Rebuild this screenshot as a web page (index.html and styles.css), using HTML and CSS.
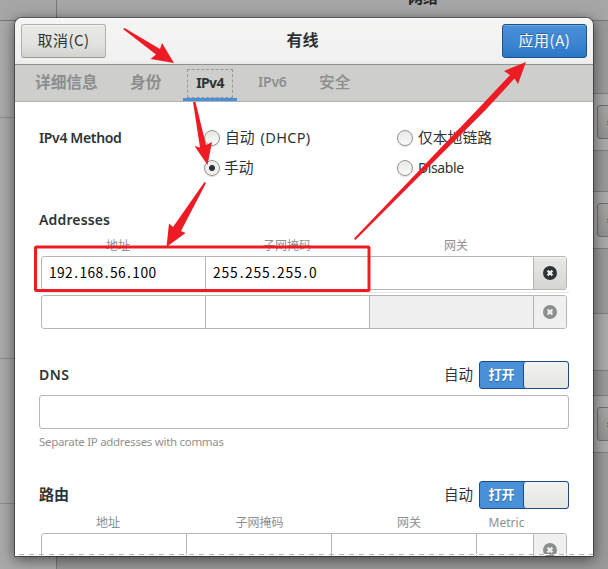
FILE: index.html
```html
<!DOCTYPE html>
<html lang="zh-CN">
<head>
<meta charset="utf-8">
<title>有线</title>
<link rel="stylesheet" href="styles.css">
</head>
<body>
<div class="window">
  <header class="window-bar"><div class="window-side"></div><div class="window-title">网络</div></header>
  <div class="window-body">
    <div class="sidebar"><i class="s1"></i><i class="s2"></i><i class="s3"></i></div>
    <div class="panel">
      <div class="gap g1"></div><div class="card"><span class="cog">⚙</span></div>
      <div class="gap g2"></div><div class="card"><span class="cog">⚙</span></div>
      <div class="gap g3"></div><div class="card"></div>
      <div class="gap g4"></div><div class="card"><span class="cog">⚙</span></div>
      <div class="gap g5"></div>
    </div>
  </div>
</div>

<div class="dialog">
  <header class="titlebar">
    <button class="btn">取消(C)</button>
    <h1>有线</h1>
    <button class="btn primary">应用(A)</button>
  </header>
  <nav class="tabs">
    <span class="tab t1">详细信息</span><span class="tab t2">身份</span><span class="tab active"><b>IPv4</b></span><span class="tab t4">IPv6</span><span class="tab t5">安全</span>
  </nav>
  <main>
    <section class="method">
      <h2 class="method-title">IPv4 Method</h2>
      <label><i class="radio"></i><span>自动<span class="dhcp">(DHCP)</span></span></label>
      <label><i class="radio"></i><span>仅本地链路</span></label>
      <span></span>
      <label class="chosen"><i class="radio on"></i><span>手动</span></label>
      <label><i class="radio"></i><span class="disable">Disable</span></label>
    </section>
    <h2 class="addresses">Addresses</h2>
    <div class="heads three"><span>地址</span><span>子网掩码</span><span>网关</span></div>
    <div class="fields three">
      <div>192<s>.</s>168<s>.</s>56<s>.</s>100</div><div class="mask">255<s>.</s>255<s>.</s>255<s>.</s>0</div><div></div>
      <button class="remove"><svg viewBox="0 0 14 14"><circle cx="7" cy="7" r="7"/><path d="M4.6 4.6l4.8 4.8M9.4 4.6L4.6 9.4"/></svg></button>
    </div>
    <div class="divider"></div>
    <div class="fields three">
      <div></div><div></div><div class="off"></div>
      <button class="remove off"><svg viewBox="0 0 14 14"><circle cx="7" cy="7" r="7"/><path d="M4.6 4.6l4.8 4.8M9.4 4.6L4.6 9.4"/></svg></button>
    </div>
    <div class="row dns"><h2>DNS</h2><span class="auto">自动</span><div class="switch"><b>打开</b><i></i></div></div>
    <div class="entry"></div>
    <p class="hint">Separate IP addresses with commas</p>
    <div class="row routes"><h2>路由</h2><span class="auto">自动</span><div class="switch"><b>打开</b><i></i></div></div>
    <div class="heads four"><span>地址</span><span>子网掩码</span><span>网关</span><span>Metric</span></div>
    <div class="fields four">
      <div></div><div></div><div></div><div></div>
      <button class="remove off"><svg viewBox="0 0 14 14"><circle cx="7" cy="7" r="7"/><path d="M4.6 4.6l4.8 4.8M9.4 4.6L4.6 9.4"/></svg></button>
    </div>
  </main>
  <div class="more"></div>
</div>

<svg class="marks" viewBox="0 0 608 569">
  <path d="M123 29L124.500 28L160 49L162 43L174 63L150.500 59L156 54.500Z"/>
  <path d="M193 102L195.500 102L206 145L212 142L207.500 165L194.500 146L200 147.500Z"/>
  <path d="M204.500 182L206 183L181 231L185.500 233L166.500 247L169 223.500L173 227Z"/>
  <path d="M354 238.500L477 110L510 75L504 71L526 62L518 84L514.500 78.500L485.500 110L355.500 240Z"/>
  <rect x="35.500" y="247" width="333.500" height="43.500" rx="1"/>
</svg>
</body>
</html>
```

FILE: styles.css
```css
* { box-sizing: border-box; }
body {
  margin: 0; width: 608px; height: 569px; overflow: hidden; position: relative;
  font: 14.5px/20px "Noto Sans", "Noto Sans CJK SC", sans-serif; color: #2e3436; background: #a9a9a9;
}
h1, h2, p { margin: 0; }
button { font: inherit; color: inherit; padding: 0; }

.window { height: 569px; display: flex; flex-direction: column; }
.window-bar { height: 21px; display: flex; border-bottom: 1px solid #777770; background: #a6a6a6; }
.window-side { width: 57px; border-right: 1px solid #777; }
.window-title { flex: 1; padding-left: 351px; margin-top: -13px; font-weight: 700; line-height: 20px; color: #222; font-size: 15px; }
.window-body { flex: 1; display: flex; min-height: 0; }
.sidebar { flex: none; width: 57px; border-right: 1px solid #777; background: #a9a9a9; }
.sidebar i { display: block; border-bottom: 1px solid #8b8b8b; }
.s1 { height: 97px; } .s2 { height: 241px; } .s3 { height: 145px; }
.panel { flex: 1; min-width: 0; overflow: hidden; background: #999; }
.g1 { height: 72px; } .g2 { height: 40px; } .g3 { height: 64px; } .g4 { height: 24px; } .g5 { height: 116px; }
.card { height: 58px; background: #a9a9a9; border: solid #7e7e7e; border-width: 1px 0; padding: 11px 0 0 540px; }
.cog { display: block; width: 40px; height: 34px; border: 1px solid #6f6f6f; border-radius: 3px; background: linear-gradient(#a4a4a3, #929291); padding-left: 8px; line-height: 32px; font-size: 15px; color: #333; }

.dialog {
  position: absolute; left: 15px; top: 18px; width: 578px; height: 538px; overflow: hidden;
  background: #fff; border-radius: 7px 7px 0 0;
  box-shadow: 0 0 0 1px rgba(0,0,0,.4), 0 3px 14px 1px rgba(0,0,0,.52);
}
.titlebar { height: 47px; display: flex; align-items: flex-start; justify-content: space-between; padding: 6px 6px 0; background: linear-gradient(#f5f5f4, #f1f1f1 90%, #e9e9e8); border-top: 1px solid #fff; border-bottom: 1px solid #92928b; }
.titlebar .btn { margin-top: -1px; }
.titlebar h1 { font-size: 16px; line-height: 22px; margin: 4px 3px 0 0; }
.btn { width: 85px; height: 34px; border: 1px solid #b2b2ad; border-bottom-color: #989890; border-radius: 3px; background: linear-gradient(#e9e9e8, #e2e2e0 60%, #d2d2ce); box-shadow: inset 0 1px #f5f5f4; font: 15px/30px "Noto Sans CJK SC", sans-serif; letter-spacing: .5px; padding-bottom: 2px; }
.primary { color: #fff; border-color: #1c5187; background: linear-gradient(#4a90d9, #3c84d1 60%, #2a76c6); box-shadow: inset 0 1px #70a9e2; text-shadow: 0 -1px rgba(0,0,0,.3); }

.tabs { height: 37px; display: flex; background: #cececd; border-bottom: 1px solid #b1b1ad; color: #8b8e8e; font-size: 15.7px; font-weight: 600; line-height: 34px; }
.tab { height: 36px; white-space: nowrap; }
.t1 { margin-left: 20px; width: 95px; } .t2 { width: 53px; }
.active { width: 54px; border-bottom: 3px solid #4a90d9; color: #2e3436; padding: 4px 4px 0; margin-right: 21px; }
.active b { display: block; height: 29px; border: 1px dashed #989998; line-height: 26px; text-align: center; font-size: 14px; font-weight: 700; letter-spacing: -.6px; }
.t4 { width: 61px; font-size: 14px; letter-spacing: -.2px; }
.t5 { font-weight: 500; }

main { padding: 0 24px; }
h2 { font-size: 14px; font-weight: 600; line-height: 20px; }
.method-title { letter-spacing: -.35px; }
.addresses { letter-spacing: .15px; }
.method { display: grid; grid-template-columns: 165px 193px 1fr; grid-auto-rows: 30px; padding-top: 21px; align-items: center; }
.method label { display: flex; align-items: center; gap: 5px; white-space: nowrap; font-size: 14.8px; }
.method label > span { position: relative; top: -1px; }
.method .chosen { gap: 4px; }
.radio { width: 16px; height: 16px; flex: none; border: 1px solid #94948d; border-radius: 50%; background: linear-gradient(#e8e8e7, #fafafa); box-shadow: 0 1px 1px #ddd; }
.on { background: radial-gradient(circle, #2e3436 0 2.7px, #eeeeed 3.3px); }
.dhcp { font-size: 14.5px; letter-spacing: .3px; margin-left: 6px; }
.method label > .disable { font-size: 14px; letter-spacing: -.4px; top: 0; }
.addresses { margin-top: 27px; }

.heads { display: grid; font-size: 12px; line-height: 20px; color: #8d908f; text-align: center; }
.heads.three { grid-template-columns: 158px 180px 158px; margin: 6px 0 -1px; height: 21px; }
.heads.four { grid-template-columns: 138px 165px 134px 61px; margin-top: 4px; height: 20px; }
.fields { display: grid; margin: 0 2px; height: 34px; border: 1px solid #b6b6b3; border-radius: 3px; }
.fields > div { border-right: 1px solid #b6b6b3; padding-left: 7px; color: #000; font: 13.8px/31px "Noto Sans CJK SC", sans-serif; letter-spacing: .4px; }
.fields > .mask { letter-spacing: .9px; }
.fields s { display: inline-block; width: 6.3px; padding-left: 1px; text-decoration: none; }
.fields.three { grid-template-columns: 164px 164px 164px 1fr; }
.fields.four { grid-template-columns: 145px 145px 145px 57px 1fr; }
.remove { border: 0; display: flex; align-items: center; justify-content: center; background: linear-gradient(#e8e8e7, #d5d5d1); box-shadow: inset 0 1px #f5f5f4; border-radius: 0 2px 2px 0; }
.remove svg { width: 14px; height: 14px; fill: #2e3436; }
.remove path { stroke: #eee; stroke-width: 2.2; fill: none; }
.off { background: #f0f0f0; box-shadow: none; }
.off svg { fill: #8b8f8f; }
.divider { height: 1px; margin: 2px 0; background: #e5e5e5; }
.row { display: flex; align-items: center; height: 28px; }
.row h2 { flex: 1; letter-spacing: .5px; }
.dns { margin-top: 32px; }
.auto { font-size: 14.5px; margin: -2px 6px 0 0; }
.switch { width: 90px; height: 28px; display: flex; border: 1px solid #1c4d80; border-radius: 3px; background: #4a90d9; color: #fff; overflow: hidden; }
.switch b { width: 43px; text-align: center; line-height: 25px; font-size: 13px; text-shadow: 0 1px 1px #1c4d80aa; }
.switch i { flex: 1; border-left: 1px solid #1c4d80; border-radius: 3px 2px 2px 3px; background: linear-gradient(#f2f2f1, #e5e5e2); }
.entry { height: 34px; margin-top: 6px; border: 1px solid #b6b6b3; border-radius: 3px; }
.hint { font-size: 11.5px; line-height: 20px; color: #8f9190; margin-top: 3px; letter-spacing: -.3px; }
.routes { margin-top: 29px; }
.routes h2 { font-size: 15px; font-weight: 700; letter-spacing: 0; margin-top: -2px; }
.more { position: absolute; left: 4px; right: 0; bottom: 1px; height: 1px; background: repeating-linear-gradient(90deg, #b4b4b4 0 5px, #fff 5px 10px); }
.marks { position: absolute; left: 0; top: 0; width: 608px; height: 569px; fill: #ed1c24; pointer-events: none; }
.marks rect { fill: none; stroke: #ed1c24; stroke-width: 3; }
```
